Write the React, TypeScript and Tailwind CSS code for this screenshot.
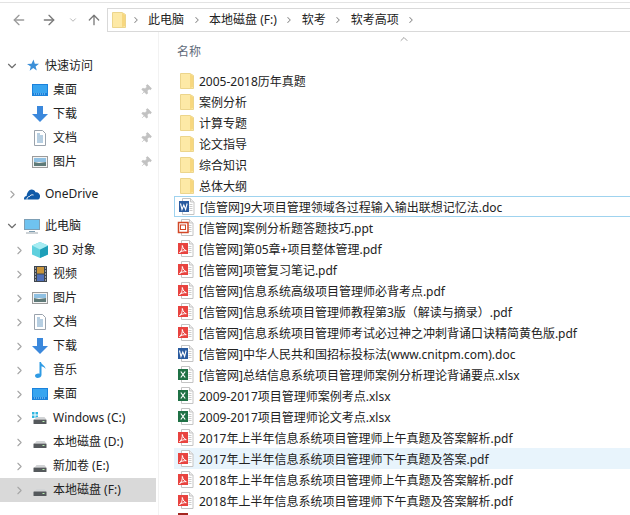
import React from 'react';
import { ArrowLeft, ArrowRight, ArrowUp, ChevronDown, ChevronRight, ChevronUp, Pin } from 'lucide-react';

const FolderIcon: React.FC<{ className?: string }> = ({ className = '' }) => (
  <svg width="14" height="16" viewBox="0 0 14 16" className={`shrink-0 ${className}`}>
    <path d="M.5.5h9.500l3.500 2v13H.5z" fill="#fde9a6" stroke="#ecd58c" />
    <path d="M10 1v14l3-1V3z" fill="#f7d77f" />
  </svg>
);

const DocBase: React.FC<{ children: React.ReactNode }> = ({ children }) => (
  <svg width="17" height="17" viewBox="0 0 17 17" className="shrink-0">
    <path d="M4.500.5h8l3.500 3.500v12.500h-11.500z" fill="#fff" stroke="#c4c4c4" />
    <path d="M12.500.5v3.500h3.500" fill="#eee" stroke="#c4c4c4" />
    <path d="M11.500 6.500h3M11.500 8.500h3M11.500 10.500h3M11.500 12.500h3" stroke="#cccccc" />
    {children}
  </svg>
);

const PdfIcon = () => (
  <DocBase>
    <rect x="1" y="3" width="10" height="11" fill="#e8433f" />
    <path d="M2.500 12.500c2-1 3-4 2.800-7 .8 3 2 4.600 4 5.200-2.400-.2-4.500.4-6.800 1.800z" fill="none" stroke="#fff" strokeWidth="1" />
  </DocBase>
);

const WordIcon = () => (
  <DocBase>
    <rect x="1" y="3" width="10" height="11" fill="#2a5b9f" />
    <path d="M2.500 5.500l1.500 6 1.800-4.500 1.800 4.500 1.500-6" fill="none" stroke="#fff" strokeWidth="1.100" />
  </DocBase>
);

const ExcelIcon = () => (
  <DocBase>
    <rect x="1" y="3" width="10" height="11" fill="#1f7145" />
    <path d="M3.800 5.500l4.400 6M8.200 5.500l-4.400 6" stroke="#fff" strokeWidth="1.200" />
  </DocBase>
);

const PptIcon = () => (
  <DocBase>
    <rect x="1.500" y="3.500" width="9.500" height="10" fill="#fff" stroke="#d24726" strokeWidth="1.500" />
    <rect x="3.500" y="6" width="5" height="4.500" fill="none" stroke="#d24726" />
  </DocBase>
);

// only the top of this one shows, the list is cut off right below it
const CutIcon = () => (
  <svg width="17" height="17" viewBox="0 0 17 17" className="shrink-0">
    <rect x="1" y="0" width="10" height="12" fill="#a3261f" />
  </svg>
);

const DesktopIcon = () => (
  <svg width="16" height="12" viewBox="0 0 16 12">
    <rect width="16" height="12" fill="#1b82dc" />
    <rect x="1" y="1" width="14" height="8" fill="#38a5f0" />
    <path d="M2 10h12" stroke="#a6d8fa" strokeDasharray="1 1" />
  </svg>
);

const DownloadIcon = () => (
  <svg width="16" height="16" viewBox="0 0 16 16">
    <path d="M5 0h6v8h5l-8 8-8-8h5z" fill="#3b88dc" />
  </svg>
);

const DocumentIcon = () => (
  <svg width="12" height="16" viewBox="0 0 12 16">
    <path d="M.5.5h8l3 3v12h-11z" fill="#fff" stroke="#9aa3ad" />
    <path d="M3 4h3M3 6h6M3 8h6M3 10h6M3 12h6" stroke="#6f9ec4" />
  </svg>
);

const PictureIcon = () => (
  <svg width="16" height="12" viewBox="0 0 16 12">
    <rect x=".5" y=".5" width="15" height="11" fill="#f4f4f4" stroke="#9b9b9b" />
    <rect x="2" y="2" width="12" height="4" fill="#8fc0e2" />
    <path d="M2 6l5 1 7-1v4H2z" fill="#5f7a78" />
  </svg>
);

const StarIcon = () => (
  <svg width="14" height="14" viewBox="0 0 14 14">
    <path d="M8.500.5l1.300 4.200 4.200.1-3.400 2.600 1.200 4.200-3.600-2.500-3.500 2.700 1-4.300-3.700-2.400 4.500-.3z" fill="#3b8fd8" />
  </svg>
);

const CloudIcon = () => (
  <svg width="16" height="11" viewBox="0 0 16 11">
    <path d="M0 10.500c-.2-2 .8-3.400 2.600-3.600C3 3.500 5 .5 7.500.5c2 0 3.400 1 4 2.800 2.400-.4 4 1 4.500 3.200.2 2-.5 4-2 4z" fill="#0f5aa8" />
    <path d="M3 10.500c-.2-1.500 1-3 2.500-3 .8-1.500 2.500-2 4-1.500" fill="none" stroke="#fff" />
  </svg>
);

const ComputerIcon = () => (
  <svg width="16" height="15" viewBox="0 0 16 15">
    <rect x=".5" y=".5" width="15" height="10" fill="#6fc3f0" stroke="#7d9fb5" />
    <path d="M5 12h6v1H5z" fill="#7e9db0" />
    <path d="M2 14h12" stroke="#9aa5ad" />
  </svg>
);

const CubeIcon = () => (
  <svg width="16" height="16" viewBox="0 0 16 16">
    <path d="M8 0l8 3.500v9L8 16l-8-3.500v-9z" fill="#5fd0de" />
    <path d="M8 7.500L16 3.500v9L8 16z" fill="#1d9fb8" />
    <path d="M8 0l8 3.500-8 4-8-4z" fill="#a6ecf2" />
  </svg>
);

const FilmIcon = () => (
  <svg width="13" height="16" viewBox="0 0 13 16">
    <rect width="13" height="16" fill="#3f464e" />
    <rect x="3" y="1" width="7" height="6.500" fill="#c9953c" />
    <rect x="3" y="8.500" width="7" height="6.500" fill="#4f6fb8" />
    <path d="M1 2h1M1 5h1M1 8h1M1 11h1M1 14h1M11 2h1M11 5h1M11 8h1M11 11h1M11 14h1" stroke="#fff" />
  </svg>
);

const MusicIcon = () => (
  <svg width="11" height="16" viewBox="0 0 11 16">
    <path d="M4.500 0h1.500c.3 2.500 4.500 3.500 4.500 7-.8-1.500-2-2.400-4-2.800V13c0 2-2 3-4 3C1 16 0 15 0 13.800c0-1.600 2.500-2.800 4.500-2z" fill="#2f9be4" />
  </svg>
);

const DriveIcon: React.FC<{ windows?: boolean }> = ({ windows }) => (
  <svg width="16" height="14" viewBox="0 0 16 14">
    {windows && <path d="M0 1h2.500v2.500H0zM3.500 1H6v2.500H3.500zM0 4.500h2.500V7H0zM3.500 4.500H6V7H3.500z" fill="#30b6e0" />}
    <path d="M3 8l1.500-2h8L14 8z" fill="#d2d4d6" />
    <rect x="1.500" y="8.500" width="13" height="4.500" rx="0.500" fill="#55595c" />
    <path d="M10.500 10.500h2" stroke="#b8f0b0" />
  </svg>
);

const NavRow: React.FC<{
  icon?: React.ReactNode;
  label: string;
  level?: 0 | 1;
  chevron?: 'right' | 'down';
  pinned?: boolean;
  active?: boolean;
}> = ({ icon, label, level = 1, chevron, pinned, active }) => (
  <div className={`flex h-6 items-center ${active ? 'bg-[#d9d9d9]' : ''}`}>
    <div className={`flex justify-center shrink-0 ${level === 0 ? 'w-6' : 'w-8'}`}>
      {chevron === 'right' && <ChevronRight size={13} strokeWidth={2} className={`text-[#a6a6a6] ${level === 0 ? '' : 'ml-[7px]'}`} />}
      {chevron === 'down' && <ChevronDown size={14} strokeWidth={2} className="text-[#6e6e6e]" />}
    </div>
    <div className="flex w-[21px] shrink-0">
      <div className="flex w-4 justify-center">{icon}</div>
    </div>
    <span className="whitespace-nowrap">{label}</span>
    {pinned && <Pin size={12} fill="#c2c2c2" strokeWidth={1.5} className="ml-auto mr-[4px] rotate-45 text-[#c2c2c2]" />}
  </div>
);

const crumbs = ['此电脑', '本地磁盘 (F:)', '软考', '软考高项'];

const files: { name: string; icon: React.ReactNode; state?: 'focus' | 'hover' }[] = [
  { name: '[信管网]9大项目管理领域各过程输入输出联想记忆法.doc', icon: <WordIcon />, state: 'focus' },
  { name: '[信管网]案例分析题答题技巧.ppt', icon: <PptIcon /> },
  { name: '[信管网]第05章+项目整体管理.pdf', icon: <PdfIcon /> },
  { name: '[信管网]项管复习笔记.pdf', icon: <PdfIcon /> },
  { name: '[信管网]信息系统高级项目管理师必背考点.pdf', icon: <PdfIcon /> },
  { name: '[信管网]信息系统项目管理师教程第3版（解读与摘录）.pdf', icon: <PdfIcon /> },
  { name: '[信管网]信息系统项目管理师考试必过神之冲刺背诵口诀精简黄色版.pdf', icon: <PdfIcon /> },
  { name: '[信管网]中华人民共和国招标投标法(www.cnitpm.com).doc', icon: <WordIcon /> },
  { name: '[信管网]总结信息系统项目管理师案例分析理论背诵要点.xlsx', icon: <ExcelIcon /> },
  { name: '2009-2017项目管理师案例考点.xlsx', icon: <ExcelIcon /> },
  { name: '2009-2017项目管理师论文考点.xlsx', icon: <ExcelIcon /> },
  { name: '2017年上半年信息系统项目管理师上午真题及答案解析.pdf', icon: <PdfIcon /> },
  { name: '2017年上半年信息系统项目管理师下午真题及答案.pdf', icon: <PdfIcon />, state: 'hover' },
  { name: '2018年上半年信息系统项目管理师上午真题及答案解析.pdf', icon: <PdfIcon /> },
  { name: '2018年上半年信息系统项目管理师下午真题及答案解析.pdf', icon: <PdfIcon /> },
  { name: '', icon: <CutIcon /> },
];

const folders = ['2005-2018历年真题', '案例分析', '计算专题', '论文指导', '综合知识', '总体大纲'];

export default function App() {
  return (
    <div className="flex h-[515px] w-[630px] flex-col overflow-hidden bg-white text-[12px] leading-none text-[#222222] [font-family:'Noto_Sans','Noto_Sans_CJK_SC',sans-serif]">
      <div className="mt-[2px] h-px shrink-0 bg-[#e3e3e3]" />
      {/* nav bar */}
      <div className="mt-[5px] flex h-[24px] shrink-0 items-center">
        <ArrowLeft size={16} strokeWidth={2} className="ml-[11px] text-[#9b9b9b]" />
        <ArrowRight size={16} strokeWidth={2} className="ml-[14px] text-[#7a7a7a]" />
        <ChevronDown size={10} strokeWidth={2} className="ml-[11px] text-[#a8a8a8]" />
        <ArrowUp size={16} strokeWidth={2} className="ml-[8px] text-[#7a7a7a]" />
        <div className="ml-[5px] flex h-full flex-1 items-center border border-r-0 border-[#d9d9d9] pl-[4px]">
          <FolderIcon className="mr-[-3px]" />
          {crumbs.map((c) => (
            <React.Fragment key={c}>
              <ChevronRight size={10} strokeWidth={2.5} className="mx-[7.5px] text-[#8a8a8a]" />
              <span className="whitespace-nowrap">{c}</span>
            </React.Fragment>
          ))}
          <ChevronRight size={10} strokeWidth={2.5} className="ml-[7.5px] text-[#8a8a8a]" />
        </div>
      </div>

      <div className="flex min-h-0 flex-1">
        {/* sidebar */}
        <div className="w-[159px] shrink-0 overflow-hidden border-r border-[#f2f2f2] pt-[22px]">
          <div className="mr-[2px]">
            <NavRow level={0} chevron="down" icon={<StarIcon />} label="快速访问" />
            <NavRow icon={<DesktopIcon />} label="桌面" pinned />
            <NavRow icon={<DownloadIcon />} label="下载" pinned />
            <NavRow icon={<DocumentIcon />} label="文档" pinned />
            <NavRow icon={<PictureIcon />} label="图片" pinned />
            <div className="h-2" />
            <NavRow level={0} chevron="right" icon={<CloudIcon />} label="OneDrive" />
            <div className="h-2" />
            <NavRow level={0} chevron="down" icon={<ComputerIcon />} label="此电脑" />
            <NavRow chevron="right" icon={<CubeIcon />} label="3D 对象" />
            <NavRow chevron="right" icon={<FilmIcon />} label="视频" />
            <NavRow chevron="right" icon={<PictureIcon />} label="图片" />
            <NavRow chevron="right" icon={<DocumentIcon />} label="文档" />
            <NavRow chevron="right" icon={<DownloadIcon />} label="下载" />
            <NavRow chevron="right" icon={<MusicIcon />} label="音乐" />
            <NavRow chevron="right" icon={<DesktopIcon />} label="桌面" />
            <NavRow chevron="right" icon={<DriveIcon windows />} label="Windows (C:)" />
            <NavRow chevron="right" icon={<DriveIcon />} label="本地磁盘 (D:)" />
            <NavRow chevron="right" icon={<DriveIcon />} label="新加卷 (E:)" />
            <NavRow chevron="right" icon={<DriveIcon />} label="本地磁盘 (F:)" active />
          </div>
        </div>

        {/* file list */}
        <div className="relative min-w-0 flex-1 overflow-hidden">
          <ChevronUp size={12} strokeWidth={1.5} className="absolute left-[239px] top-[1px] text-[#808080]" />
          <div className="pl-[18px] pt-[14px] text-[#5f6b7a]">名称</div>
          <div className="pt-[12px] pl-[15px]">
            {folders.map((f) => (
              <div key={f} className="flex h-[21px] items-center gap-[5px] pl-[6px]">
                <FolderIcon />
                <span className="translate-y-px whitespace-nowrap">{f}</span>
              </div>
            ))}
            {files.map((f) => (
              <div
                key={f.name}
                className={`flex h-[21px] items-center gap-[5px] pl-[3px] ${f.state === 'focus' ? 'border border-r-0 border-[#9fd3ef]' : ''} ${f.state === 'hover' ? 'bg-[#e8f4fc]' : ''}`}
              >
                {f.icon}
                <span className="translate-y-px whitespace-nowrap">{f.name}</span>
              </div>
            ))}
          </div>
        </div>
      </div>
    </div>
  );
}
